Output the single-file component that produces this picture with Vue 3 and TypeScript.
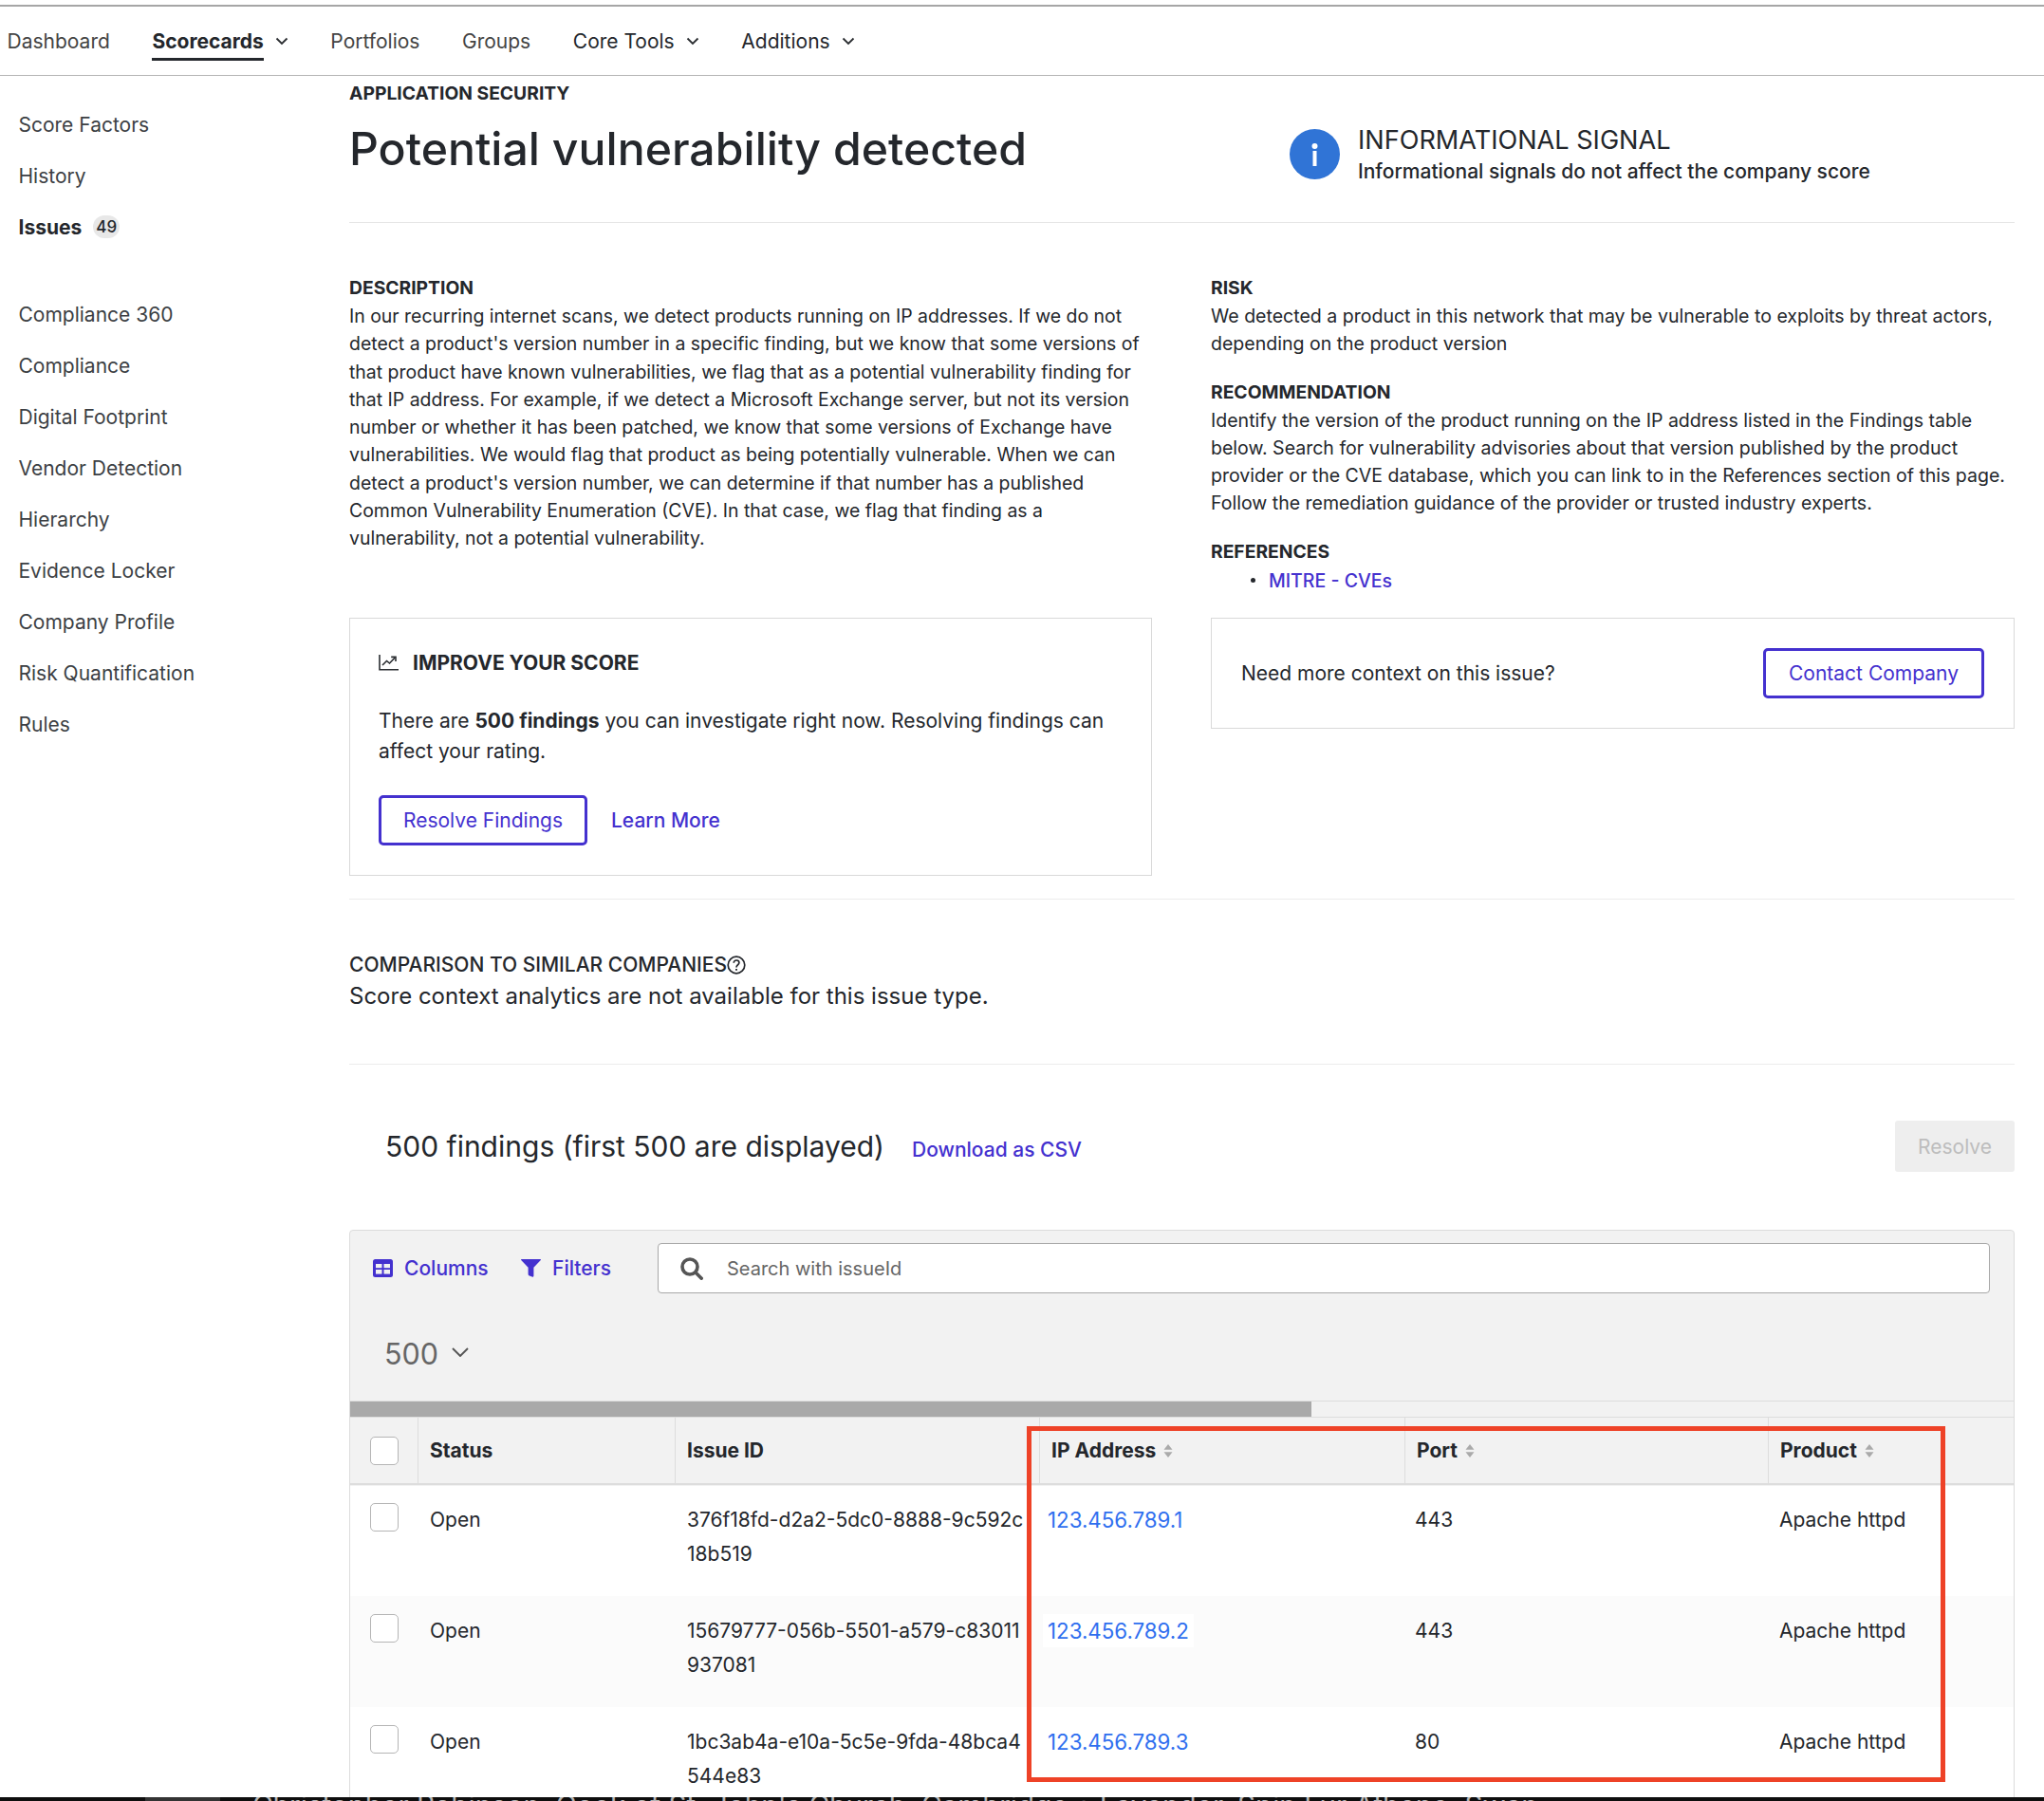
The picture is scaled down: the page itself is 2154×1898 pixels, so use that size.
<script setup lang="ts">
interface NavItem { label: string; active?: boolean; menu?: boolean; dark?: boolean }
const navItems: NavItem[] = [
  { label: 'Dashboard' },
  { label: 'Scorecards', active: true, menu: true },
  { label: 'Portfolios' },
  { label: 'Groups' },
  { label: 'Core Tools', menu: true, dark: true },
  { label: 'Additions', menu: true, dark: true },
]
const sideTop = ['Score Factors', 'History']
const sideBottom = ['Compliance 360', 'Compliance', 'Digital Footprint', 'Vendor Detection', 'Hierarchy', 'Evidence Locker', 'Company Profile', 'Risk Quantification', 'Rules']
const description = "In our recurring internet scans, we detect products running on IP addresses. If we do not detect a product's version number in a specific finding, but we know that some versions of that product have known vulnerabilities, we flag that as a potential vulnerability finding for that IP address. For example, if we detect a Microsoft Exchange server, but not its version number or whether it has been patched, we know that some versions of Exchange have vulnerabilities. We would flag that product as being potentially vulnerable. When we can detect a product's version number, we can determine if that number has a published Common Vulnerability Enumeration (CVE). In that case, we flag that finding as a vulnerability, not a potential vulnerability."
const columns = ['IP Address', 'Port', 'Product']
const rows = [
  { id: ['376f18fd-d2a2-5dc0-8888-9c592c', '18b519'], ip: '123.456.789.1', port: '443' },
  { id: ['15679777-056b-5501-a579-c83011', '937081'], ip: '123.456.789.2', port: '443', alt: true },
  { id: ['1bc3ab4a-e10a-5c5e-9fda-48bca4', '544e83'], ip: '123.456.789.3', port: '80' },
]
</script>

<template>
  <div class="page">
    <nav class="nav">
      <div v-for="item in navItems" :key="item.label" class="nav-item" :class="{ dark: item.dark }">
        <span class="nav-label" :class="{ active: item.active }">{{ item.label }}</span>
        <svg v-if="item.menu" class="nav-chev" viewBox="0 0 14 9" width="14" height="9"><path d="M1.5 1.5 7 7l5.5-5.5" fill="none" stroke="#2a2d31" stroke-width="1.8" /></svg>
      </div>
    </nav>

    <div class="layout">
      <aside class="side">
        <div v-for="s in sideTop" :key="s" class="side-item">{{ s }}</div>
        <div class="side-item side-strong">Issues <span class="badge">49</span></div>
        <div class="side-gap"></div>
        <div v-for="s in sideBottom" :key="s" class="side-item">{{ s }}</div>
      </aside>

      <main class="main">
        <div class="eyebrow">APPLICATION SECURITY</div>
        <header class="head">
          <h1 class="title">Potential vulnerability detected</h1>
          <div class="signal">
            <svg class="signal-icon" viewBox="0 0 53 53" width="53" height="53">
              <circle cx="26.5" cy="26.5" r="26.5" fill="#3074d6" />
              <circle cx="26.5" cy="18" r="3" fill="#fff" />
              <rect x="24.5" y="23" width="4" height="16" fill="#fff" />
            </svg>
            <div>
              <div class="signal-title">INFORMATIONAL SIGNAL</div>
              <div class="signal-sub">Informational signals do not affect the company score</div>
            </div>
          </div>
        </header>

        <section class="cols">
          <div class="col-text">
            <h3 class="label">DESCRIPTION</h3>
            <p class="body">{{ description }}</p>
          </div>
          <div class="col-text col-right">
            <h3 class="label">RISK</h3>
            <p class="body">We detected a product in this network that may be vulnerable to exploits by threat actors, depending on the product version</p>
            <h3 class="label label-next">RECOMMENDATION</h3>
            <p class="body">Identify the version of the product running on the IP address listed in the Findings table below. Search for vulnerability advisories about that version published by the product provider or the CVE database, which you can link to in the References section of this page. Follow the remediation guidance of the provider or trusted industry experts.</p>
            <h3 class="label label-next">REFERENCES</h3>
            <div class="ref"><span class="dot"></span><a class="ref-link">MITRE - CVEs</a></div>
          </div>

          <div class="card card-improve">
            <div class="card-head">
              <svg viewBox="0 0 21 17" width="21" height="17" fill="none" stroke="#2a2d31" stroke-width="1.6">
                <path d="M1 0v15.8h20" />
                <path d="M4 11l4.5-4.5 3 2.5L17 3.2" />
                <path d="M13.2 2.4H18v4.6" />
              </svg>
              <span>IMPROVE YOUR SCORE</span>
            </div>
            <p class="card-body">There are <b>500 findings</b> you can investigate right now. Resolving findings can affect your rating.</p>
            <div class="card-actions">
              <button class="btn-outline btn-resolve">Resolve Findings</button>
              <a class="link-strong">Learn More</a>
            </div>
          </div>
          <div class="card card-context">
            <span class="context-text">Need more context on this issue?</span>
            <button class="btn-outline btn-contact">Contact Company</button>
          </div>
        </section>

        <section class="compare">
          <div class="compare-title">COMPARISON TO SIMILAR COMPANIES<svg viewBox="0 0 20 20" width="20" height="20" fill="none" stroke="#24272c" stroke-width="1.7"><circle cx="10" cy="10" r="8.8" /><path d="M7.2 7.8c0-1.7 1.3-2.8 2.9-2.8s2.8 1 2.8 2.5c0 2.4-2.9 2.4-2.9 5" /><path d="M10 14v1.8" stroke-width="1.9" /></svg></div>
          <div class="compare-text">Score context analytics are not available for this issue type.</div>
        </section>

        <section class="findings">
          <span class="findings-title">500 findings (first 500 are displayed)</span>
          <a class="link-strong download">Download as CSV</a>
          <button class="btn-disabled">Resolve</button>
        </section>

        <section class="panel">
          <div class="toolbar">
            <a class="tool tool-columns">
              <svg viewBox="0 0 21 19" width="21" height="19"><rect width="21" height="19" rx="2.5" fill="#4431cf" /><rect x="3" y="5" width="6.5" height="4.2" fill="#f2f2f2" /><rect x="11.5" y="5" width="6.5" height="4.2" fill="#f2f2f2" /><rect x="3" y="11" width="6.5" height="4.6" fill="#f2f2f2" /><rect x="11.5" y="11" width="6.5" height="4.6" fill="#f2f2f2" /></svg>
              Columns
            </a>
            <a class="tool tool-filters">
              <svg viewBox="0 0 21 19" width="21" height="19"><path d="M.6 0h19.8c.5 0 .8.6.4 1L13.4 8.8v8.6c0 1-1 1.6-1.8 1.2L9 17.6c-1-.5-1.4-1-1.4-1.8V8.8L.2 1C-.2.6.1 0 .6 0z" fill="#4431cf" /></svg>
              Filters
            </a>
            <div class="search">
              <svg viewBox="0 0 24 24" width="24" height="24" fill="none" stroke="#555" stroke-width="3.6" stroke-linecap="round"><circle cx="10" cy="10" r="8" /><path d="M16 16l6.2 6.2" /></svg>
              <span>Search with issueId</span>
            </div>
          </div>
          <div class="pager">
            <span>500</span>
            <svg class="pager-chev" viewBox="0 0 18 10" width="18" height="10"><path d="M1 1l8 8 8-8" fill="none" stroke="#555" stroke-width="1.9" /></svg>
          </div>
          <div class="scroll"><div class="thumb"></div></div>

          <div class="grid grid-head">
            <div class="cell-check"><span class="check"></span></div>
            <div class="cell-head">Status</div>
            <div class="cell-head">Issue ID</div>
            <div v-for="c in columns" :key="c" class="cell-head">
              {{ c }}
              <svg class="sort" viewBox="0 0 10 14" width="10" height="14"><path d="M5 0l4.5 5.8H.5zM5 14l4.5-5.8H.5z" fill="#aaa" /></svg>
            </div>
          </div>
          <div v-for="r in rows" :key="r.ip" class="grid grid-row" :class="{ alt: r.alt }">
            <div class="td-check"><span class="check"></span></div>
            <div class="td">Open</div>
            <div class="td td-id"><div v-for="part in r.id" :key="part">{{ part }}</div></div>
            <div class="td"><a class="ip" :class="{ hover: r.alt }">{{ r.ip }}</a></div>
            <div class="td td-port">{{ r.port }}</div>
            <div class="td td-product">Apache httpd</div>
            <div></div>
          </div>
        </section>
      </main>
    </div>

    <div class="annotation"></div>
    <div class="caption"><span class="caption-chip"></span><span class="caption-text">Christopher Robinson, Cook of St. John's Church, Cambridge • Lavender, Spin Fur Athene, Swan</span></div>
  </div>
</template>

<style>
html, body { margin: 0; background: #fff; }
</style>

<style scoped>
.page {
  position: relative;
  width: 2154px;
  height: 1898px;
  overflow: hidden;
  background: #fff;
  color: #24272c;
  font-family: Inter, "Liberation Sans", sans-serif;
  box-sizing: border-box;
  padding-top: 5px;
}
.nav {
  height: 75px;
  box-sizing: border-box;
  border-top: 2px solid #a6a6a6;
  border-bottom: 1px solid #b5b5b5;
  display: flex;
  gap: 44.6px;
  padding-left: 7.5px;
  font-size: 21px;
}
.nav-item { display: flex; align-items: center; height: 72px; color: #444; }
.nav-item.dark { color: #24272c; }
.nav-label { position: relative; }
.nav-label.active { font-weight: 700; color: #24272c; }
.nav-label.active::after { content: ""; position: absolute; left: 0; right: 0; top: 30px; height: 3px; background: #24272c; }
.nav-chev { margin-left: 12px; }
.layout { display: flex; }
.side { width: 368px; flex: none; padding: 24px 0 0 19.5px; box-sizing: border-box; font-size: 21px; color: #3c3f44; }
.side-item { height: 54px; display: flex; align-items: center; }
.side-strong { font-weight: 700; color: #24272c; gap: 12px; }
.badge { background: #e8e8e8; border-radius: 12px; font-size: 17px; font-weight: 500; padding: 1px 3px; line-height: 22px; }
.side-gap { height: 38px; }
.main { width: 1755px; flex: none; }
.eyebrow { font-size: 19.3px; font-weight: 700; line-height: 24px; padding-top: 6px; }
.head { height: 125px; box-sizing: border-box; border-bottom: 1px solid #e6e6e6; display: flex; padding-top: 18px; }
.title { margin: 0; width: 991px; font-size: 48.2px; line-height: 58px; font-weight: 550; }
.signal { display: flex; gap: 19px; padding-top: 8px; }
.signal-icon { flex: none; }
.signal-title { font-size: 27.1px; line-height: 33px; margin-top: -5px; }
.signal-sub { font-size: 21px; line-height: 30px; margin-top: 2px; font-weight: 500; }
.cols { display: grid; grid-template-columns: 846px 847px; column-gap: 62px; grid-template-rows: 363px auto; align-items: start; padding: 53px 0 24px; border-bottom: 1px solid #ececec; }
.label { margin: 0; font-size: 19.3px; line-height: 31px; font-weight: 700; }
.label-next { margin-top: 20px; }
.body { margin: 0; font-size: 19.45px; line-height: 29.3px; }
.col-right .body { font-size: 19.55px; }
.ref { display: flex; align-items: center; height: 30px; padding-left: 42px; gap: 14px; }
.dot { width: 5px; height: 5px; border-radius: 50%; background: #24272c; }
.ref-link { font-size: 19.5px; font-weight: 500; color: #4431cf; }
.card { border: 1px solid #d9d9d9; box-sizing: border-box; }
.card-improve { height: 272px; padding: 30px 30px 0; }
.card-head { display: flex; align-items: center; gap: 15px; font-size: 21px; font-weight: 700; height: 32px; }
.card-body { margin: 30px 0 0; font-size: 21px; line-height: 32px; }
.card-body b { font-weight: 700; }
.card-actions { display: flex; align-items: center; gap: 25px; margin-top: 30px; }
.btn-outline { height: 53px; box-sizing: border-box; background: #fff; border: 3px solid #4431cf; border-radius: 5px; color: #4431cf; font: inherit; font-size: 21px; padding: 0; }
.btn-resolve { width: 220px; }
.btn-contact { width: 233px; }
.link-strong { font-size: 21px; font-weight: 500; color: #4431cf; }
.card-context { height: 117px; display: flex; align-items: center; justify-content: space-between; padding: 0 31px; }
.context-text { font-size: 21px; }
.compare { height: 174px; box-sizing: border-box; border-bottom: 1px solid #ececec; padding-top: 54px; }
.compare-title { display: flex; align-items: center; font-size: 21px; line-height: 30px; font-weight: 500; }
.compare-text { font-size: 24px; line-height: 36px; }
.findings { display: flex; align-items: center; height: 54px; margin-top: 59px; padding-left: 38px; }
.findings-title { font-size: 30px; }
.download { margin: 6px 0 0 29px; }
.btn-disabled { margin-left: auto; width: 126px; height: 54px; border: none; border-radius: 3px; background: #eee; color: #bdbdbd; font: inherit; font-size: 21px; padding: 0; }
.panel { margin-top: 61px; height: 620px; box-sizing: border-box; border: 1px solid #dcdcdc; border-radius: 4px 4px 0 0; background: linear-gradient(#f2f2f2, #f2f2f2) top / 100% 269px no-repeat #fff; }
.toolbar { display: flex; align-items: center; padding: 13px 0 0 24px; height: 53px; box-sizing: content-box; }
.tool { display: flex; align-items: center; gap: 12px; font-size: 21px; font-weight: 500; color: #4431cf; }
.tool-columns { width: 156px; }
.tool-filters { width: 144px; }
.search { width: 1404px; height: 53px; box-sizing: border-box; background: #fff; border: 1px solid #a8a8a8; border-radius: 4px; display: flex; align-items: center; gap: 25px; padding-left: 23px; font-size: 20px; color: #666; }
.pager { display: flex; align-items: center; gap: 14px; padding: 14px 0 0 36px; height: 113px; font-size: 30.5px; color: #666; box-sizing: border-box; }
.pager-chev { margin-bottom: 3px; }
.scroll { height: 18px; background: #f2f2f2; border-top: 1px solid #ddd; border-bottom: 1px solid #ddd; box-sizing: border-box; }
.thumb { width: 1013px; height: 100%; background: #a9a9a9; }
.grid { display: grid; grid-template-columns: 71px 271px 384px 385px 383px 1fr; }
.grid-head { height: 71px; background: #f2f2f2; border-bottom: 2px solid #ddd; box-sizing: border-box; font-size: 21px; font-weight: 700; }
.cell-check { display: flex; align-items: center; padding-left: 21px; }
.cell-head { display: flex; align-items: center; gap: 8px; padding-left: 12px; border-left: 1px solid #ddd; }
.check { display: block; width: 30px; height: 30px; box-sizing: border-box; background: #fff; border: 1px solid #b5b5b5; border-radius: 5px; }
.grid-row { height: 117px; box-sizing: border-box; font-size: 21px; }
.grid-row.alt { background: #fbfbfb; }
.td-check { padding: 18.5px 0 0 21px; }
.td { padding: 18.5px 0 0 13px; line-height: 36px; }
.td-port { padding-left: 11px; }
.td-product { padding-left: 12px; }
.td-id div { white-space: nowrap; }
.ip { color: #2f6fef; margin-left: -9px; padding: 4px 5px; font-size: 22.3px; }
.ip.hover { background: #fff; vertical-align: 1px; }
.annotation { position: absolute; left: 1082px; top: 1503px; width: 968px; height: 375px; box-sizing: border-box; border: 5px solid #ee4227; pointer-events: none; }
.caption { position: absolute; left: 0; right: 0; bottom: 0; height: 4px; background: #0e0e0e; overflow: hidden; }
.caption-chip { position: absolute; left: 153px; top: 0; width: 79px; height: 4px; background: #333; }
.caption-text { position: absolute; left: 266px; top: -9px; white-space: nowrap; color: #b5b5b5; font-size: 29.6px; line-height: 34px; }
</style>
